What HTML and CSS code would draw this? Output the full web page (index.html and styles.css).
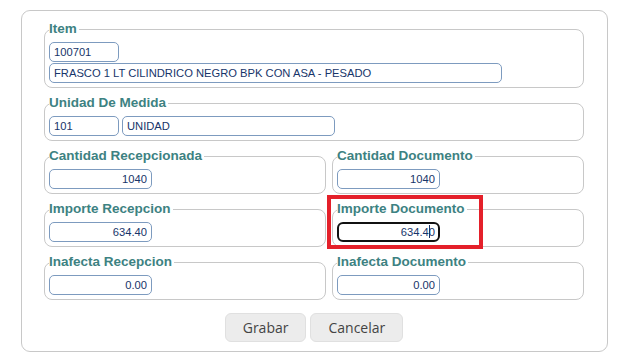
FILE: index.html
```html
<!DOCTYPE html>
<html lang="es">
<head>
    <meta charset="UTF-8">
    <meta name="viewport" content="width=device-width, initial-scale=1.0">
    <title>Recepcion de Item</title>
    <link rel="stylesheet" href="styles.css">
</head>
<body>
    <div class="form-container">
        <fieldset class="group">
            <legend>Item</legend>
            <div class="field-stack">
                <input class="field code" type="text" value="100701" readonly>
                <input class="field desc-long" type="text" value="FRASCO 1 LT CILINDRICO NEGRO BPK CON ASA - PESADO" readonly>
            </div>
        </fieldset>

        <fieldset class="group">
            <legend>Unidad De Medida</legend>
            <div class="field-row">
                <input class="field code" type="text" value="101" readonly>
                <input class="field desc-short" type="text" value="UNIDAD" readonly>
            </div>
        </fieldset>

        <div class="pair-grid">
            <fieldset class="group">
                <legend>Cantidad Recepcionada</legend>
                <input class="field number" type="text" value="1040" readonly>
            </fieldset>
            <fieldset class="group">
                <legend>Cantidad Documento</legend>
                <input class="field number" type="text" value="1040" readonly>
            </fieldset>

            <fieldset class="group">
                <legend>Importe Recepcion</legend>
                <input class="field number" type="text" value="634.40" readonly>
            </fieldset>
            <div class="highlight-wrap">
                <fieldset class="group">
                    <legend>Importe Documento</legend>
                    <div class="field number focused">634.4<span class="caret"></span>0</div>
                </fieldset>
                <div class="highlight"></div>
            </div>

            <fieldset class="group">
                <legend>Inafecta Recepcion</legend>
                <input class="field number" type="text" value="0.00" readonly>
            </fieldset>
            <fieldset class="group">
                <legend>Inafecta Documento</legend>
                <input class="field number" type="text" value="0.00" readonly>
            </fieldset>
        </div>

        <div class="actions">
            <button class="btn">Grabar</button>
            <button class="btn">Cancelar</button>
        </div>
    </div>
</body>
</html>
```

FILE: styles.css
```css
body {
    margin: 0;
    padding: 10px 0 0 21px;
    background-color: #ffffff;
    font-family: 'Liberation Sans', Arial, sans-serif;
}

.form-container {
    width: 540px;
    padding: 10px 23px 9px 22px;
    border: 1px solid #c8c8c8;
    border-radius: 9px;
}

.group {
    margin: 0 0 7px 0;
    padding: 0 4px 4px 4px;
    border: 1px solid #c8c8c8;
    border-radius: 8px;
    min-width: 0;
}

.group legend {
    padding: 0 2px 0 0;
    font-size: 13.5px;
    line-height: 16px;
    font-weight: bold;
    color: #3d8282;
}

.field-stack {
    display: flex;
    flex-direction: column;
    gap: 1px;
    margin-top: 5px;
}

.field-row {
    display: flex;
    gap: 3px;
    margin-top: 5px;
}

.field {
    box-sizing: border-box;
    height: 20px;
    margin: 0;
    padding: 0 4px;
    border: 1px solid #7d9bbf;
    border-radius: 5px;
    font-family: 'Liberation Sans', Arial, sans-serif;
    font-size: 11.2px;
    line-height: 18px;
    color: #17356a;
    background-color: #ffffff;
    outline: none;
}

.code {
    width: 70px;
}

.desc-long {
    width: 453px;
}

.desc-short {
    width: 213px;
}

.number {
    display: block;
    width: 103px;
    margin-top: 5px;
    text-align: right;
}

.focused {
    border: 2px solid #111111;
    border-radius: 6px;
    line-height: 16px;
    padding-right: 3px;
}

.caret {
    display: inline-block;
    width: 1px;
    height: 13px;
    margin: 0 -1px 0 0;
    vertical-align: -2px;
    background-color: #17356a;
}

.pair-grid {
    display: grid;
    grid-template-columns: 282px 252px;
    column-gap: 6px;
}

.highlight-wrap {
    position: relative;
}

.highlight {
    position: absolute;
    left: -5px;
    top: -6px;
    width: 148px;
    height: 46px;
    border: 4px solid #e4202a;
    pointer-events: none;
}

.actions {
    display: flex;
    justify-content: center;
    gap: 4px;
    margin-top: 6px;
}

.btn {
    height: 29px;
    padding: 0 17px;
    font-family: 'Open Sans', sans-serif;
    font-size: 14px;
    color: #444444;
    background-color: #ececec;
    border: 1px solid #e0e0e0;
    border-radius: 6px;
    cursor: pointer;
}

.btn:hover {
    background-color: #e2e2e2;
}
```
